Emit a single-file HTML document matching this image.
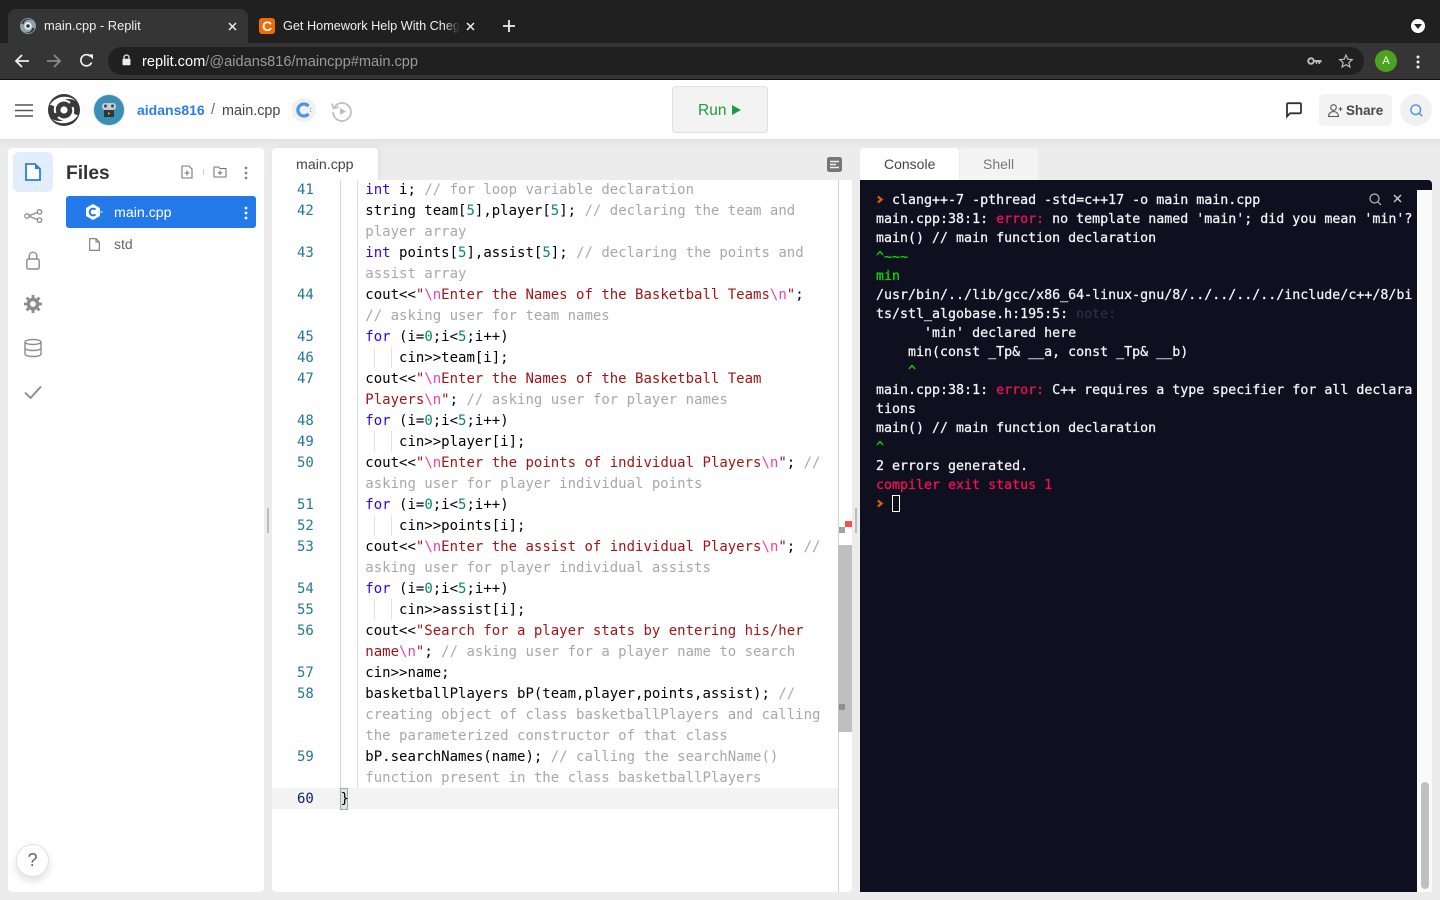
<!DOCTYPE html>
<html lang="en"><head><meta charset="utf-8"><title>main.cpp - Replit</title>
<style>
html,body{margin:0;padding:0;width:1440px;height:900px;overflow:hidden;background:#ececec;font-family:"Liberation Sans",sans-serif}
.a{position:absolute}
svg{position:absolute;overflow:visible}
pre{margin:0;position:absolute;font-family:"DejaVu Sans Mono",monospace;white-space:pre}
#code,#nums{font-size:14px;line-height:21px;top:180px}
#code{left:365.3px;color:#000}
#nums{left:297px;color:#237893}
.k{color:#2f00ff}.n{color:#09885a}.s{color:#a31515}.e{color:#ee3fa8}.c{color:#a8a8a8}
#con{left:876px;top:191px;font-size:13.3px;line-height:19px;color:#f5f5f5;-webkit-text-stroke:.25px currentColor}
.r{color:#f5104f}.g{color:#00e000}.d{color:#2c2f3a}
.g2{width:1px;background:#d6d6d6}
</style></head><body>

<!-- Browser chrome -->
<div class="a" style="left:0;top:0;width:1440px;height:43px;background:#202020"></div>
<div class="a" style="left:8px;top:9px;width:240px;height:34px;background:#353535;border-radius:8px 8px 0 0"></div>
<div class="a" style="left:0;top:43px;width:1440px;height:36px;background:#353535"></div>
<div class="a" style="left:0;top:79px;width:1440px;height:1px;background:#111"></div>
<svg style="left:20px;top:18px" width="16" height="16" viewBox="0 0 32 32"><circle cx="16" cy="16" r="16" fill="#8fa3ad"/><path d="M2.5 12A14 14 0 0 1 27 7A11.5 11.5 0 0 0 7 13Q4.5 11 2.5 12Z" fill="#353535"/><path d="M29.5 20A14 14 0 0 1 5 25A11.5 11.5 0 0 0 25 19Q27.5 21 29.5 20Z" fill="#353535"/><circle cx="16" cy="16" r="7.5" fill="#e6edf0"/><circle cx="16" cy="16" r="3.5" fill="#353535"/></svg>
<div class="a" style="left:44px;top:18px;font-size:12.9px;line-height:16px;color:#eee;white-space:nowrap">main.cpp - Replit</div>
<svg style="left:228px;top:22px" width="9" height="9" viewBox="0 0 9 9"><path d="M1 1L8 8M8 1L1 8" stroke="#eee" stroke-width="1.5"/></svg>
<div class="a" style="left:259px;top:18px;width:16px;height:16px;background:#f26b00;border-radius:3px"></div>
<div class="a" style="left:259px;top:18px;width:16px;height:16px;color:#fff;font:bold 14px/16px 'Liberation Sans',sans-serif;text-align:center">C</div>
<div class="a" style="left:283px;top:18px;width:176px;height:16px;overflow:hidden;font-size:12.7px;line-height:16px;color:#eee;white-space:nowrap">Get Homework Help With Chegg Study</div>
<div class="a" style="left:444px;top:18px;width:16px;height:16px;background:linear-gradient(90deg,rgba(32,32,32,0),#202020)"></div>
<svg style="left:466px;top:22px" width="9" height="9" viewBox="0 0 9 9"><path d="M1 1L8 8M8 1L1 8" stroke="#eee" stroke-width="1.5"/></svg>
<svg style="left:503px;top:20px" width="12" height="12" viewBox="0 0 12 12"><path d="M6 0V12M0 6H12" stroke="#eee" stroke-width="1.8"/></svg>
<div class="a" style="left:1411px;top:19px;width:14px;height:14px;border-radius:50%;background:#fff"></div>
<svg style="left:1414px;top:24px" width="8" height="5" viewBox="0 0 8 5"><path d="M0 0H8L4 5Z" fill="#222"/></svg>

<svg style="left:14px;top:53px" width="16" height="16" viewBox="0 0 16 16"><path d="M15 8H2M8 2L2 8L8 14" fill="none" stroke="#eee" stroke-width="1.8"/></svg>
<svg style="left:46px;top:53px" width="16" height="16" viewBox="0 0 16 16"><path d="M1 8H14M8 2L14 8L8 14" fill="none" stroke="#8a8a8a" stroke-width="1.8"/></svg>
<svg style="left:79px;top:53px" width="15" height="15" viewBox="0 0 15 15"><path d="M12.6 9.5A5.6 5.6 0 1 1 11.5 3.4" fill="none" stroke="#eee" stroke-width="1.7"/><path d="M9 1H14V6Z" fill="#eee" transform="translate(0 .4)"/></svg>
<div class="a" style="left:108px;top:47px;width:1256px;height:28px;background:#202020;border-radius:14px"></div>
<svg style="left:122px;top:54px" width="9" height="12" viewBox="0 0 9 12"><path d="M2 5V3.5a2.5 2.5 0 0 1 5 0V5" fill="none" stroke="#eee" stroke-width="1.2"/><rect x="0.5" y="4.8" width="8" height="6.4" rx="1" fill="#eee"/></svg>
<div class="a" style="left:142px;top:53px;font-size:14.6px;line-height:18px;color:#9a9a9a;white-space:nowrap"><span style="color:#fff">replit.com</span>/@aidans816/maincpp#main.cpp</div>
<svg style="left:1307px;top:56px" width="15" height="10" viewBox="0 0 15 10"><circle cx="4" cy="5" r="2.8" fill="none" stroke="#bbb" stroke-width="2"/><path d="M7 4H14.5V6.5H13V8H11.5V6.5H10V8H8.8V6H7Z" fill="#bbb"/></svg>
<svg style="left:1339px;top:54px" width="14" height="14" viewBox="0 0 14 14"><path d="M7 1L8.8 5.2L13.3 5.6L9.9 8.6L10.9 13L7 10.7L3.1 13L4.1 8.6L.7 5.6L5.2 5.2Z" fill="none" stroke="#bbb" stroke-width="1.2"/></svg>
<div class="a" style="left:1375px;top:50px;width:22px;height:22px;border-radius:50%;background:#4fa21f;color:#fff;font-size:11px;line-height:22px;text-align:center">A</div>
<svg style="left:1416px;top:55px" width="4" height="14" viewBox="0 0 4 14"><circle cx="2" cy="2" r="1.5" fill="#eee"/><circle cx="2" cy="7" r="1.5" fill="#eee"/><circle cx="2" cy="12" r="1.5" fill="#eee"/></svg>

<!-- App header -->
<div class="a" style="left:0;top:80px;width:1440px;height:59px;background:#fff"></div>
<div class="a" style="left:0;top:139px;width:1440px;height:10px;background:linear-gradient(#e4e4e4,#ececec)"></div>
<svg style="left:15px;top:104px" width="18" height="13" viewBox="0 0 18 13"><path d="M0 1H18M0 6.5H18M0 12H18" stroke="#555" stroke-width="1.6"/></svg>
<svg style="left:48px;top:94px" width="32" height="32" viewBox="0 0 32 32"><circle cx="16" cy="16" r="16" fill="#3a3a3a"/><path d="M2 11C7 2 20 0 28 7C21 3 11 5 7 13Q4.5 11 2 11Z" fill="#fff"/><path d="M30 21C25 30 12 32 4 25C11 29 21 27 25 19Q27.5 21 30 21Z" fill="#fff"/><path d="M7.5 19A9 9 0 0 1 22 9" fill="none" stroke="#fff" stroke-width="2"/><path d="M24.5 13A9 9 0 0 1 10 23" fill="none" stroke="#fff" stroke-width="2"/><circle cx="16" cy="16" r="3.6" fill="#fff"/></svg>
<svg style="left:93px;top:94px" width="32" height="32" viewBox="0 0 32 32"><circle cx="16" cy="16" r="15.5" fill="#3b8fb5" stroke="#dfe7ea"/><rect x="9" y="9" width="14" height="7" rx="3" fill="#c8ccd0"/><circle cx="12.5" cy="12" r="1.5" fill="#444"/><circle cx="19.5" cy="12" r="1.5" fill="#444"/><rect x="11" y="16" width="10" height="7" fill="#2c3640"/><path d="M15 18L17.5 19.5L15 21Z" fill="#e5a52a"/></svg>
<div class="a" style="left:137px;top:101px;font-size:14px;line-height:18px;font-weight:bold;color:#2a7de8;white-space:nowrap">aidans816</div>
<div class="a" style="left:211px;top:101px;font-size:14.5px;line-height:18px;color:#666">/</div>
<div class="a" style="left:222px;top:102px;font-size:14.4px;line-height:18px;color:#444;white-space:nowrap">main.cpp</div>
<svg style="left:292px;top:98px" width="24" height="24" viewBox="0 0 24 24"><circle cx="12" cy="12" r="12" fill="#f1f1f1"/><path d="M16.5 8.2A6 6 0 1 0 16.5 15.8" fill="none" stroke="#4d96e4" stroke-width="3.2"/><path d="M18 10.5H19M18 13.5H19" stroke="#4d96e4" stroke-width="1.2"/></svg>
<svg style="left:331px;top:100px" width="22" height="22" viewBox="0 0 22 22"><path d="M3.5 7A9 9 0 1 1 2 12" fill="none" stroke="#bdbdbd" stroke-width="1.7"/><path d="M1 3.5L2.5 8.5L7.5 7" fill="none" stroke="#bdbdbd" stroke-width="1.7"/><path d="M9 8L15 11.5L9 15Z" fill="#bdbdbd"/></svg>

<div class="a" style="left:672px;top:86px;width:94px;height:45px;background:#f3f3f3;border:1px solid #e0e0e0;border-radius:4px"></div>
<div class="a" style="left:698px;top:101px;font-size:15.5px;line-height:19px;color:#1f9a3c">Run</div>
<svg style="left:732px;top:105px" width="9" height="10" viewBox="0 0 9 10"><path d="M0 0L9 5L0 10Z" fill="#1f9a3c"/></svg>

<svg style="left:1286px;top:102px" width="16" height="16" viewBox="0 0 16 16"><path d="M1 14.5V2.5Q1 1.2 2.3 1.2H13.7Q15 1.2 15 2.5V10Q15 11.3 13.7 11.3H4Z" fill="none" stroke="#333" stroke-width="1.8"/></svg>
<div class="a" style="left:1319px;top:94px;width:73px;height:32px;background:#f3f3f3;border-radius:5px"></div>
<svg style="left:1328px;top:104px" width="15" height="13" viewBox="0 0 15 13"><circle cx="5.5" cy="3.5" r="2.8" fill="none" stroke="#555" stroke-width="1.1"/><path d="M.6 12.5C.6 9 3 7.6 5.5 7.6S10.4 9 10.4 12.5Z" fill="none" stroke="#555" stroke-width="1.1"/><path d="M12.5 3V7M10.5 5H14.5" stroke="#555" stroke-width="1.1"/></svg>
<div class="a" style="left:1346px;top:102px;font-size:13.4px;line-height:17px;font-weight:bold;color:#484848">Share</div>
<div class="a" style="left:1400px;top:94px;width:32px;height:32px;background:#f1f1f1;border-radius:50%"></div>
<svg style="left:1410px;top:104px" width="13" height="13" viewBox="0 0 13 13"><circle cx="5.7" cy="5.7" r="4.8" fill="none" stroke="#4a94ec" stroke-width="1.4"/><path d="M9.2 9.2L12.2 12.2" stroke="#4a94ec" stroke-width="1.4"/></svg>

<!-- Sidebar -->
<div class="a" style="left:8px;top:148px;width:256px;height:744px;background:#fff;border-radius:4px"></div>
<div class="a" style="left:13px;top:152px;width:40px;height:40px;background:#e2eefb;border-radius:6px"></div>
<svg style="left:25px;top:163px" width="16" height="18" viewBox="0 0 16 18"><path d="M1 1H10L15 6V17H1Z" fill="#fff" stroke="#2a7de8" stroke-width="1.8"/><path d="M10 1V6H15Z" fill="#2a7de8"/></svg>
<svg style="left:24px;top:209px" width="19" height="14" viewBox="0 0 19 14"><circle cx="3" cy="7" r="2.2" fill="none" stroke="#8c8c8c" stroke-width="1.3"/><circle cx="15.5" cy="2.8" r="2.2" fill="none" stroke="#8c8c8c" stroke-width="1.3"/><circle cx="15.5" cy="11.2" r="2.2" fill="none" stroke="#8c8c8c" stroke-width="1.3"/><path d="M5.2 6.6L13.4 3.5M5.2 7.4L13.4 10.5" stroke="#8c8c8c" stroke-width="1.3"/></svg>
<svg style="left:26px;top:251px" width="14" height="19" viewBox="0 0 14 19"><path d="M3.2 8V5a3.8 3.8 0 0 1 7.6 0V8" fill="none" stroke="#8c8c8c" stroke-width="1.4"/><rect x=".8" y="8" width="12.4" height="10" rx="1.5" fill="none" stroke="#8c8c8c" stroke-width="1.4"/></svg>
<svg style="left:24px;top:295px" width="18" height="18" viewBox="0 0 18 18"><circle cx="9" cy="9" r="4.6" fill="none" stroke="#8c8c8c" stroke-width="3.4"/><path d="M9 0V4M9 14V18M0 9H4M14 9H18M2.6 2.6L5.5 5.5M12.5 12.5L15.4 15.4M15.4 2.6L12.5 5.5M5.5 12.5L2.6 15.4" stroke="#8c8c8c" stroke-width="2.8"/></svg>
<svg style="left:24px;top:339px" width="18" height="18" viewBox="0 0 18 18"><ellipse cx="9" cy="3" rx="8" ry="2.5" fill="none" stroke="#8c8c8c" stroke-width="1.4"/><path d="M1 3V15C1 16.4 4.6 17.5 9 17.5S17 16.4 17 15V3M1 9C1 10.4 4.6 11.5 9 11.5S17 10.4 17 9" fill="none" stroke="#8c8c8c" stroke-width="1.4"/></svg>
<svg style="left:24px;top:385px" width="18" height="14" viewBox="0 0 18 14"><path d="M1 7.5L6.5 13L17 1.5" fill="none" stroke="#8c8c8c" stroke-width="1.9"/></svg>

<div class="a" style="left:66px;top:162px;font-size:19.2px;line-height:24px;font-weight:bold;color:#333">Files</div>
<svg style="left:181px;top:165px" width="12" height="14" viewBox="0 0 12 14"><path d="M1 1H8L11 4V13H1Z" fill="none" stroke="#777" stroke-width="1.1"/><path d="M6 5.5V10.5M3.5 8H8.5" stroke="#777" stroke-width="1.1"/></svg>
<div class="a" style="left:203px;top:169px;width:1px;height:6px;background:#ccc"></div>
<svg style="left:213px;top:166px" width="14" height="12" viewBox="0 0 14 12"><path d="M1 1H5.5L7 2.6H13V11H1Z" fill="none" stroke="#777" stroke-width="1.1"/><path d="M7 4.5V9M4.8 6.8H9.2" stroke="#777" stroke-width="1.1"/></svg>
<svg style="left:244px;top:166px" width="4" height="14" viewBox="0 0 4 14"><circle cx="2" cy="2" r="1.4" fill="#888"/><circle cx="2" cy="7" r="1.4" fill="#888"/><circle cx="2" cy="12" r="1.4" fill="#888"/></svg>
<div class="a" style="left:66px;top:196px;width:190px;height:32px;background:#2479e9;border-radius:3px"></div>
<svg style="left:85px;top:204px" width="18" height="16" viewBox="0 0 18 16"><path d="M8 0L15 4V12L8 16L1 12V4Z" fill="#fff"/><path d="M10.5 5.6A3.4 3.4 0 1 0 10.5 10.4" fill="none" stroke="#2479e9" stroke-width="2"/><path d="M12 8H18" stroke="#cfe1fa" stroke-width="1"/></svg>
<div class="a" style="left:114px;top:205px;font-size:14.2px;line-height:17px;color:#fff;white-space:nowrap">main.cpp</div>
<svg style="left:244px;top:206px" width="4" height="14" viewBox="0 0 4 14"><circle cx="2" cy="2" r="1.4" fill="#fff"/><circle cx="2" cy="7" r="1.4" fill="#fff"/><circle cx="2" cy="12" r="1.4" fill="#fff"/></svg>
<svg style="left:89px;top:238px" width="11" height="13" viewBox="0 0 11 13"><path d="M.7 .7H7L10.3 4V12.3H.7Z" fill="none" stroke="#777" stroke-width="1.1"/><path d="M7 .7V4H10.3" fill="none" stroke="#777" stroke-width="1"/></svg>
<div class="a" style="left:114px;top:236px;font-size:14px;line-height:17px;color:#666">std</div>
<div class="a" style="left:16px;top:844px;width:31px;height:31px;border-radius:50%;background:#fff;border:1px solid #e2e2e2;box-shadow:0 4px 8px rgba(0,0,0,.13);color:#666;font-size:18px;line-height:31px;text-align:center">?</div>
<div class="a" style="left:267px;top:508px;width:2px;height:25px;background:#bbb"></div>

<!-- Editor -->
<div class="a" style="left:272px;top:148px;width:106px;height:33px;background:#fff;border-radius:4px 4px 0 0;box-shadow:2px -1px 6px rgba(0,0,0,.05)"></div>
<div class="a" style="left:296px;top:157px;font-size:14.2px;line-height:17px;color:#444;white-space:nowrap">main.cpp</div>
<svg style="left:827px;top:157px" width="15" height="15" viewBox="0 0 15 15"><rect width="15" height="15" rx="2.5" fill="#777"/><path d="M3 4.5H12M3 7.5H9M3 10.5H12" stroke="#eee" stroke-width="1.4"/></svg>
<div class="a" style="left:272px;top:180px;width:580px;height:712px;background:#fff;border-radius:0 0 4px 4px"></div>
<div class="a" style="left:272px;top:788px;width:566px;height:21px;background:#f3f3f4"></div>
<div class="a g2" style="left:340px;top:180px;height:608px"></div>
<div class="a g2" style="left:357px;top:180px;height:608px;background:#dedede"></div>
<div class="a" style="left:340px;top:788px;width:6px;height:20px;background:#dbe6dd;border:1px solid #9fa99f"></div>
<div class="a g2" style="left:374px;top:347px;height:21px;background:#e2e2e2"></div><div class="a g2" style="left:391px;top:347px;height:21px;background:#e2e2e2"></div>
<div class="a g2" style="left:374px;top:431px;height:21px;background:#e2e2e2"></div><div class="a g2" style="left:391px;top:431px;height:21px;background:#e2e2e2"></div>
<div class="a g2" style="left:374px;top:515px;height:21px;background:#e2e2e2"></div><div class="a g2" style="left:391px;top:515px;height:21px;background:#e2e2e2"></div>
<div class="a g2" style="left:374px;top:599px;height:21px;background:#e2e2e2"></div><div class="a g2" style="left:391px;top:599px;height:21px;background:#e2e2e2"></div>

<pre id="nums">41
42

43

44

45
46
47

48
49
50

51
52
53

54
55
56

57
58


59

<span style="color:#0b216f">60</span></pre>
<pre id="code"><span class="k">int</span> i; <span class="c">// for loop variable declaration</span>
string team[<span class="n">5</span>],player[<span class="n">5</span>]; <span class="c">// declaring the team and</span>
<span class="c">player array</span>
<span class="k">int</span> points[<span class="n">5</span>],assist[<span class="n">5</span>]; <span class="c">// declaring the points and</span>
<span class="c">assist array</span>
cout&lt;&lt;<span class="s">"<span class="e">\n</span>Enter the Names of the Basketball Teams<span class="e">\n</span>"</span>;
<span class="c">// asking user for team names</span>
<span class="k">for</span> (i=<span class="n">0</span>;i&lt;<span class="n">5</span>;i++)
    cin&gt;&gt;team[i];
cout&lt;&lt;<span class="s">"<span class="e">\n</span>Enter the Names of the Basketball Team</span>
<span class="s">Players<span class="e">\n</span>"</span>; <span class="c">// asking user for player names</span>
<span class="k">for</span> (i=<span class="n">0</span>;i&lt;<span class="n">5</span>;i++)
    cin&gt;&gt;player[i];
cout&lt;&lt;<span class="s">"<span class="e">\n</span>Enter the points of individual Players<span class="e">\n</span>"</span>; <span class="c">//</span>
<span class="c">asking user for player individual points</span>
<span class="k">for</span> (i=<span class="n">0</span>;i&lt;<span class="n">5</span>;i++)
    cin&gt;&gt;points[i];
cout&lt;&lt;<span class="s">"<span class="e">\n</span>Enter the assist of individual Players<span class="e">\n</span>"</span>; <span class="c">//</span>
<span class="c">asking user for player individual assists</span>
<span class="k">for</span> (i=<span class="n">0</span>;i&lt;<span class="n">5</span>;i++)
    cin&gt;&gt;assist[i];
cout&lt;&lt;<span class="s">"Search for a player stats by entering his/her</span>
<span class="s">name<span class="e">\n</span>"</span>; <span class="c">// asking user for a player name to search</span>
cin&gt;&gt;name;
basketballPlayers bP(team,player,points,assist); <span class="c">//</span>
<span class="c">creating object of class basketballPlayers and calling</span>
<span class="c">the parameterized constructor of that class</span>
bP.searchNames(name); <span class="c">// calling the searchName()</span>
<span class="c">function present in the class basketballPlayers</span></pre>
<pre style="left:340.5px;top:789px;font-size:14px;line-height:21px;color:#000">}</pre>

<div class="a" style="left:838px;top:180px;width:1px;height:712px;background:#d4d4d4"></div>
<div class="a" style="left:838px;top:545px;width:14px;height:187px;background:#bfbfbf"></div>
<div class="a" style="left:845px;top:521px;width:7px;height:6px;background:#ff4d4d"></div>
<div class="a" style="left:839px;top:527px;width:6px;height:6px;background:#a3a3a3"></div>
<div class="a" style="left:839px;top:704px;width:6px;height:6px;background:#8f8f8f"></div>
<div class="a" style="left:855px;top:508px;width:2px;height:25px;background:#bbb"></div>

<!-- Console -->
<div class="a" style="left:860px;top:148px;width:99px;height:33px;background:#fff;border-radius:4px 4px 0 0"></div>
<div class="a" style="left:884px;top:156px;font-size:14px;line-height:17px;color:#444">Console</div>
<div class="a" style="left:960px;top:148px;width:78px;height:33px;background:#f4f4f4;border-radius:4px 4px 0 0"></div>
<div class="a" style="left:983px;top:156px;font-size:14px;line-height:17px;color:#777">Shell</div>
<div class="a" style="left:860px;top:180px;width:572px;height:712px;background:#0e1020;border-radius:0 4px 0 0"></div>
<div class="a" style="left:1417px;top:190px;width:15px;height:702px;background:#fafafa"></div>
<div class="a" style="left:1421px;top:782px;width:8px;height:107px;background:#c0c0c0;border-radius:4px"></div>
<svg style="left:877px;top:196px" width="6" height="7" viewBox="0 0 6 7"><path d="M.8 .5L4.6 3.5L.8 6.5" fill="none" stroke="#e8590c" stroke-width="2.2"/></svg>
<pre id="con">  clang++-7 -pthread -std=c++17 -o main main.cpp
main.cpp:38:1: <span class="r">error:</span> no template named 'main'; did you mean 'min'?
main() // main function declaration
<span class="g">^~~~</span>
<span class="g">min</span>
/usr/bin/../lib/gcc/x86_64-linux-gnu/8/../../../../include/c++/8/bi
ts/stl_algobase.h:195:5: <span class="d">note:</span>
      'min' declared here
    min(const _Tp&amp; __a, const _Tp&amp; __b)
    <span class="g">^</span>
main.cpp:38:1: <span class="r">error:</span> C++ requires a type specifier for all declara
tions
main() // main function declaration
<span class="g">^</span>
2 errors generated.
<span class="r">compiler exit status 1</span></pre>
<svg style="left:877px;top:500px" width="6" height="7" viewBox="0 0 6 7"><path d="M.8 .5L4.6 3.5L.8 6.5" fill="none" stroke="#e8590c" stroke-width="2.2"/></svg>
<div class="a" style="left:892px;top:495px;width:6px;height:15px;border:1px solid #fff"></div>
<svg style="left:1369px;top:193px" width="13" height="13" viewBox="0 0 13 13"><circle cx="5.5" cy="5.5" r="4.5" fill="none" stroke="#bbb" stroke-width="1.2"/><path d="M9 9L12 12" stroke="#bbb" stroke-width="1.2"/></svg>
<svg style="left:1393px;top:194px" width="9" height="9" viewBox="0 0 9 9"><path d="M1 1L8 8M8 1L1 8" stroke="#ccc" stroke-width="1.4"/></svg>
</body></html>
